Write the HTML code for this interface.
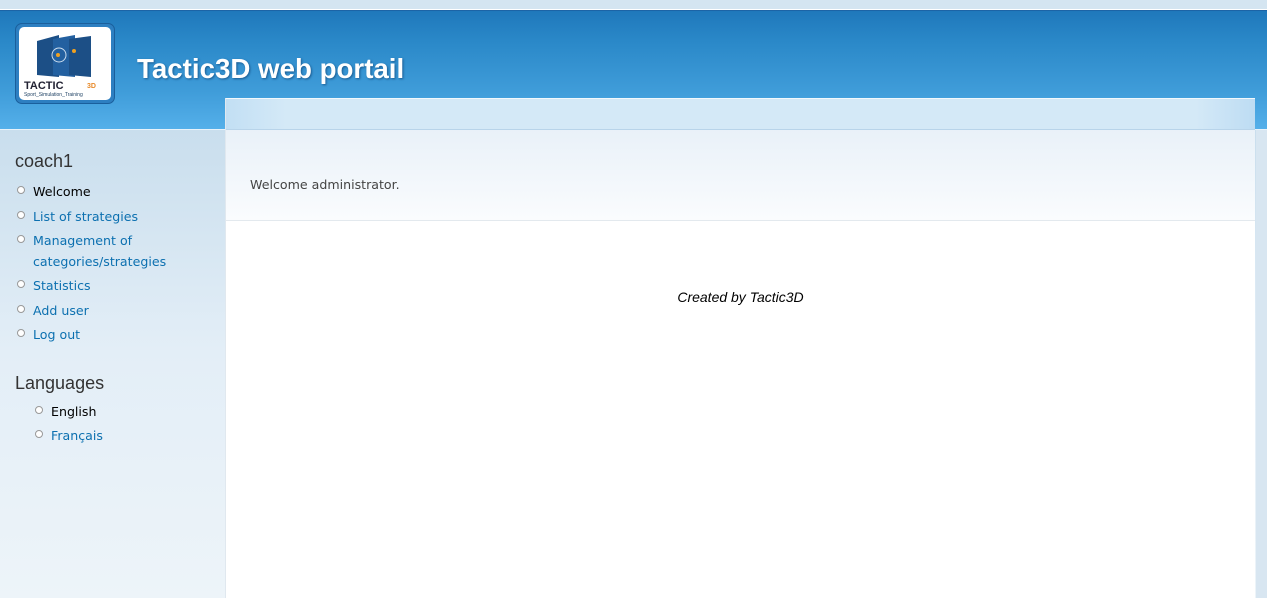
<!DOCTYPE html>
<html><head><style>
*{margin:0;padding:0;box-sizing:border-box}
body{width:1267px;height:598px;overflow:hidden;font-family:Verdana,"DejaVu Sans",sans-serif;font-size:12.6px;background:linear-gradient(#c9deed 130px,#e3eef7 350px,#edf4f9 598px);position:relative}
#top{position:absolute;left:0;top:0;width:1267px;height:10px;background:#d4e5f1;border-bottom:1px solid #fff}
#hdr{position:absolute;left:0;top:10px;width:1267px;height:120px;background:linear-gradient(#1f78bb 0,#2a88c8 30px,#3f9cd9 80px,#55b0ea 119px);border-top:1px solid #1c64a6;border-bottom:1px solid #e8f2fa}
#logo{position:absolute;left:15px;top:23px;width:100px;height:81px;border-radius:7px;background:#2d7fc1;border:1px solid #1a5f9c;padding:3px}
#logo .in{width:100%;height:100%;background:#fff;border-radius:5px;position:relative;overflow:hidden}
h1{position:absolute;left:137px;top:53px;font-family:"Liberation Sans",Arial,sans-serif;font-size:27.7px;font-weight:bold;color:#fff;text-shadow:1px 1px 2px #1a5a90}
#panel{position:absolute;left:225px;top:98px;width:1030px;height:500px;background:#fff;border-left:1px solid #e0e8ef}
#tab{height:32px;background:linear-gradient(90deg,#c2dff4,#d4e9f7 60px,#d4e9f7 970px,#bddcf3);border-top:1px solid #f2f8fc;border-bottom:1px solid #b8d4ea}
#wel{height:91px;background:linear-gradient(#e9f1f8,#fafcfe);border-bottom:1px solid #e3e9ee;padding:47px 0 0 24px;color:#444}
#foot{text-align:center;font-family:"Liberation Sans",Arial,sans-serif;font-style:italic;font-size:14px;color:#000;margin-top:68px}
#rside{position:absolute;left:1256px;top:130px;width:11px;height:468px;background:#d8e6f1}
#side{position:absolute;left:15px;top:151px;width:205px}
h2{font-family:"Liberation Sans",Arial,sans-serif;font-weight:normal;font-size:18px;color:#333}
ul{list-style:none;margin-top:10px}
li{position:relative;padding-left:18px;line-height:20.5px;margin-bottom:4px;color:#0c70b0}
li:before{content:"";position:absolute;left:2px;top:4px;width:6px;height:6px;border:1px solid #999;border-radius:50%;background:#fff}
li.b{color:#000}
</style></head><body>
<div id="top"></div>
<div id="hdr"></div>
<div id="logo"><div class="in">
<svg width="92" height="73" viewBox="0 0 92 73">
<polygon points="18,14 40,8 40,50 18,48" fill="#1c4f86"/>
<polygon points="34,12 56,8 56,50 34,48" fill="#2360a0"/>
<polygon points="50,12 72,9 72,50 50,48" fill="#1c4f86"/>
<circle cx="40" cy="28" r="7" fill="none" stroke="#cde" stroke-width="1"/>
<circle cx="39" cy="28" r="2" fill="#f0a020"/><circle cx="55" cy="24" r="2" fill="#f0a020"/>
<text x="5" y="62" font-family="Liberation Sans,Arial" font-weight="bold" font-size="11" fill="#223">TACTIC</text>
<text x="68" y="61" font-family="Liberation Sans,Arial" font-weight="bold" font-size="7" fill="#e88a2a">3D</text>
<text x="5" y="69" font-family="Liberation Sans,Arial" font-size="5" fill="#246">Sport_Simulation_Training</text>
</svg></div></div>
<h1>Tactic3D web portail</h1>
<div id="panel"><div id="tab"></div><div id="wel">Welcome administrator.</div><div id="foot">Created by Tactic3D</div></div>
<div id="rside"></div>
<div id="side">
<h2>coach1</h2>
<ul><li class="b">Welcome</li><li>List of strategies</li><li>Management of categories/strategies</li><li>Statistics</li><li>Add user</li><li>Log out</li></ul>
<h2 style="margin-top:27px">Languages</h2>
<ul style="margin-left:18px;margin-top:8px"><li class="b">English</li><li>Français</li></ul>
</div>
</body></html>
